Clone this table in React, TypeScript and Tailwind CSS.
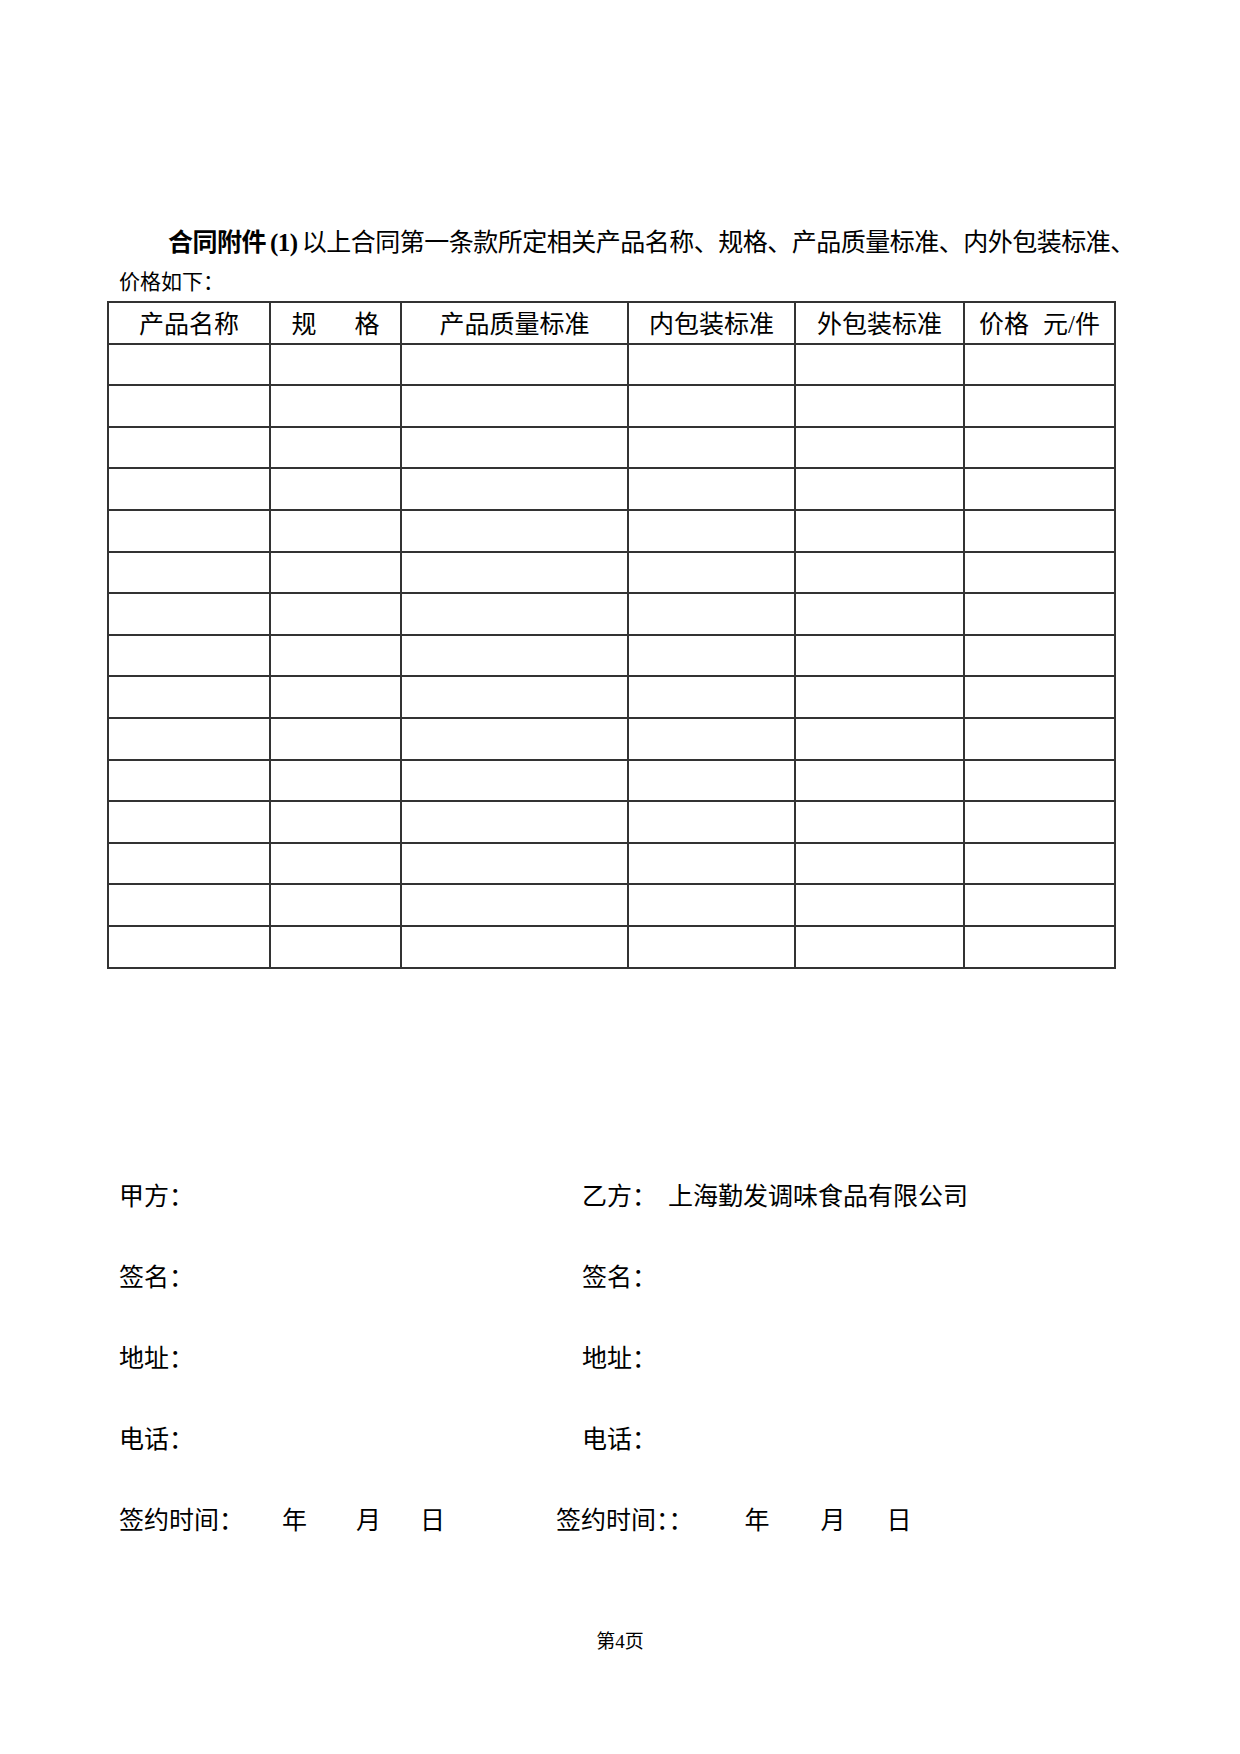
const headers = ['产品名称', '规格', '产品质量标准', '内包装标准', '外包装标准', '价格']
const colWidths = [162, 131, 227, 167, 169, 151]
const bodyRows = Array.from({ length: 15 }, (_, i) => i)

function HeaderCell({ label }: { label: string }) {
  if (label === '规格') {
    return (
      <span>
        规<span className="ml-[38px]">格</span>
      </span>
    )
  }
  if (label === '价格') {
    return (
      <span>
        价格<span className="ml-[14px]">元/件</span>
      </span>
    )
  }
  return <span>{label}</span>
}

function SignRow({ left, right }: { left: React.ReactNode; right: React.ReactNode }) {
  return (
    <div className="flex h-[81px] items-center">
      <div className="w-[463px]">{left}</div>
      <div>{right}</div>
    </div>
  )
}

export default function App() {
  return (
    <div className="w-[1240px] h-[1754px] bg-white text-black font-['Liberation_Serif','Noto_Sans_CJK_SC',serif]">
      <div className="pt-[222px] pl-[119px] w-[1120px]">
        <div className="pl-[49px] text-[25px] leading-[41px] tracking-[-0.5px] whitespace-nowrap text-justify [text-align-last:justify]">
          <span className="font-bold">合同附件<span className="mx-[4px]">(1)</span></span>以上合同第一条款所定相关产品名称、规格、产品质量标准、内外包装标准、
        </div>
        <div className="text-[21px] leading-[38px]">价格如下：</div>
      </div>

      <div className="pl-[107px]">
        <table className="border-collapse text-[25px]">
          <colgroup>
            {colWidths.map((w, i) => (
              <col key={i} style={{ width: w }} />
            ))}
          </colgroup>
          <thead>
            <tr className="h-[41.6px]">
              {headers.map((h) => (
                <th key={h} className="border-2 border-[#333] font-normal text-center p-0 pt-[4px] leading-none">
                  <HeaderCell label={h} />
                </th>
              ))}
            </tr>
          </thead>
          <tbody>
            {bodyRows.map((r) => (
              <tr key={r} className="h-[41.6px]">
                {colWidths.map((_, c) => (
                  <td key={c} className="border-2 border-[#333] p-0" />
                ))}
              </tr>
            ))}
          </tbody>
        </table>
      </div>

      <div className="mt-[187px] pl-[119px] text-[25px] leading-none">
        <SignRow left="甲方：" right={<span>乙方：<span className="ml-[11px]">上海勤发调味食品有限公司</span></span>} />
        <SignRow left="签名：" right="签名：" />
        <SignRow left="地址：" right="地址：" />
        <SignRow left="电话：" right="电话：" />
        <div className="flex h-[81px] items-center">
          <div className="w-[437px] flex">
            <span>签约时间：</span>
            <span className="ml-[38px]">年</span>
            <span className="ml-[49px]">月</span>
            <span className="ml-[39px]">日</span>
          </div>
          <div className="flex">
            <span>签约时间：：</span>
            <span className="ml-[51px]">年</span>
            <span className="ml-[51px]">月</span>
            <span className="ml-[41px]">日</span>
          </div>
        </div>
      </div>

      <div className="mt-[68px] text-center text-[19px] leading-[25px]">第4页</div>
    </div>
  )
}
